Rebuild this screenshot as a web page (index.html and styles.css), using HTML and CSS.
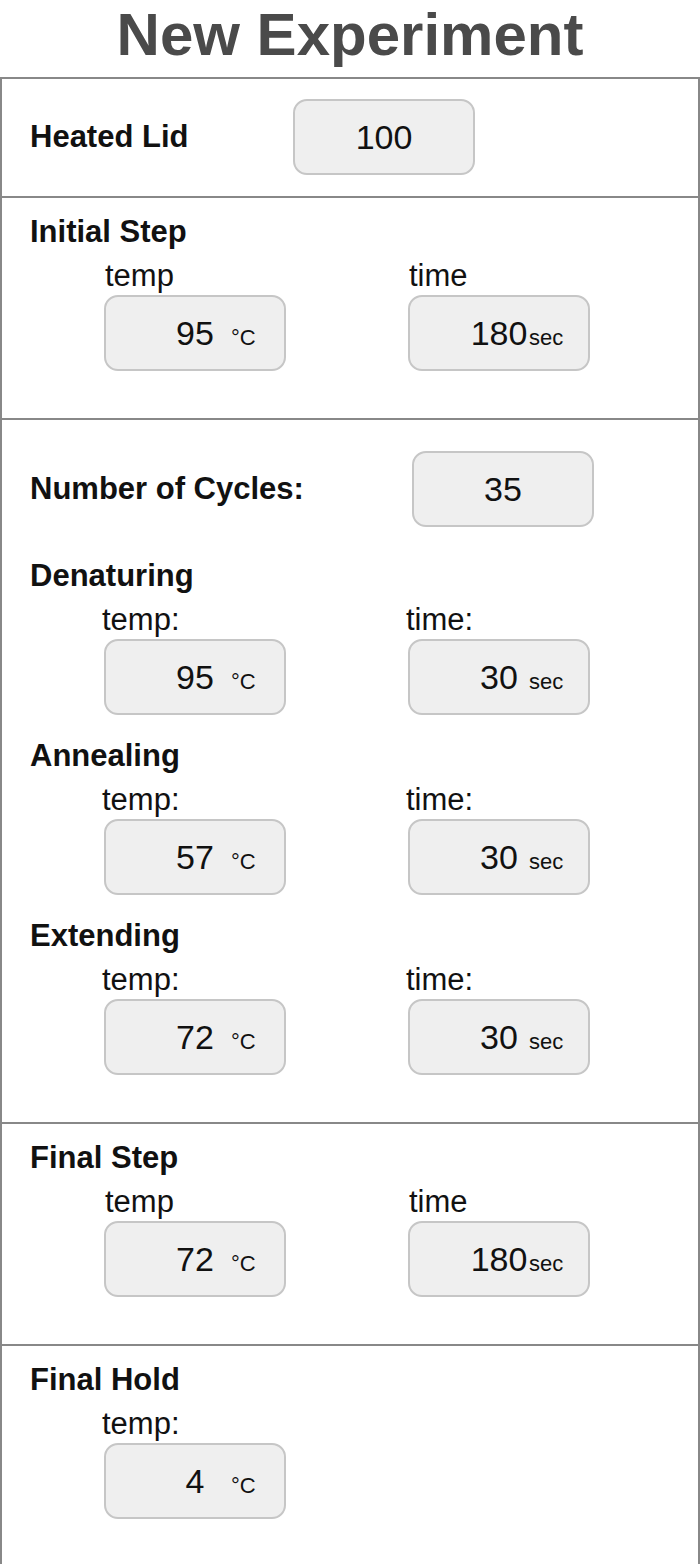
FILE: index.html
```html
<!DOCTYPE html>
<html lang="en">
<head>
  <meta charset="UTF-8" />
  <meta name="viewport" content="width=device-width, initial-scale=1" />
  <title>New Experiment</title>
  <link rel="stylesheet" href="styles.css">
</head>
<body>
  <h1 class="title">New Experiment</h1>

  <div class="panel">
    <section class="section row-section">
      <div class="row">
        <span class="row-name lid-name">Heated Lid</span>
        <div class="field"><span class="num">100</span></div>
      </div>
    </section>

    <section class="section">
      <div class="step">
        <div class="step-name">Initial Step</div>
        <div class="fields">
          <div class="col">
            <div class="col-label">temp</div>
            <div class="field"><span class="num">95</span><span class="unit unit-c">°C</span></div>
          </div>
          <div class="col">
            <div class="col-label">time</div>
            <div class="field"><span class="num">180</span><span class="unit unit-s">sec</span></div>
          </div>
        </div>
      </div>
    </section>

    <section class="section cycles">
      <div class="row">
        <span class="row-name cycle-name">Number of Cycles:</span>
        <div class="field"><span class="num">35</span></div>
      </div>

      <div class="step">
        <div class="step-name">Denaturing</div>
        <div class="fields">
          <div class="col">
            <div class="col-label colon">temp:</div>
            <div class="field"><span class="num">95</span><span class="unit unit-c">°C</span></div>
          </div>
          <div class="col">
            <div class="col-label colon">time:</div>
            <div class="field"><span class="num">30</span><span class="unit unit-s">sec</span></div>
          </div>
        </div>
      </div>

      <div class="step">
        <div class="step-name">Annealing</div>
        <div class="fields">
          <div class="col">
            <div class="col-label colon">temp:</div>
            <div class="field"><span class="num">57</span><span class="unit unit-c">°C</span></div>
          </div>
          <div class="col">
            <div class="col-label colon">time:</div>
            <div class="field"><span class="num">30</span><span class="unit unit-s">sec</span></div>
          </div>
        </div>
      </div>

      <div class="step">
        <div class="step-name">Extending</div>
        <div class="fields">
          <div class="col">
            <div class="col-label colon">temp:</div>
            <div class="field"><span class="num">72</span><span class="unit unit-c">°C</span></div>
          </div>
          <div class="col">
            <div class="col-label colon">time:</div>
            <div class="field"><span class="num">30</span><span class="unit unit-s">sec</span></div>
          </div>
        </div>
      </div>
    </section>

    <section class="section">
      <div class="step">
        <div class="step-name">Final Step</div>
        <div class="fields">
          <div class="col">
            <div class="col-label">temp</div>
            <div class="field"><span class="num">72</span><span class="unit unit-c">°C</span></div>
          </div>
          <div class="col">
            <div class="col-label">time</div>
            <div class="field"><span class="num">180</span><span class="unit unit-s">sec</span></div>
          </div>
        </div>
      </div>
    </section>

    <section class="section">
      <div class="step">
        <div class="step-name">Final Hold</div>
        <div class="fields">
          <div class="col">
            <div class="col-label colon">temp:</div>
            <div class="field"><span class="num">4</span><span class="unit unit-c">°C</span></div>
          </div>
        </div>
      </div>
    </section>
  </div>
</body>
</html>
```

FILE: styles.css
```css
body {
  font-family: "Liberation Sans", Arial, Helvetica, sans-serif;
  margin: 0;
  background: #fff;
  color: #111;
}
.title {
  margin: 0 0 8px;
  font-size: 60px;
  line-height: normal;
  font-weight: bold;
  text-align: center;
  color: #4a4a4a;
}
.panel {
  border: 2px solid #888;
}
.section {
  padding: 16px 28px 47px;
}
.section + .section {
  border-top: 2px solid #888;
}
.row-section {
  padding: 20px 28px 21px;
}
.cycles {
  padding-top: 31px;
}
.row {
  display: flex;
  align-items: center;
}
.row-name {
  font-size: 31px;
  line-height: 36px;
  font-weight: bold;
}
.lid-name {
  width: 263px;
}
.cycle-name {
  width: 382px;
}
.cycles .row {
  margin-bottom: 31px;
}
.step + .step {
  margin-top: 23px;
}
.step-name {
  font-size: 31px;
  line-height: 36px;
  font-weight: bold;
  margin-bottom: 8px;
}
.fields {
  display: flex;
  gap: 122px;
  padding-left: 74px;
}
.col-label {
  font-size: 31px;
  line-height: 36px;
  margin-bottom: 1px;
  padding-left: 1px;
}
.col-label.colon {
  margin-left: -3px;
}
.field {
  box-sizing: border-box;
  width: 182px;
  height: 76px;
  border: 2px solid #c6c6c6;
  border-radius: 14px;
  background: #efefef;
  display: grid;
  align-content: center;
  align-items: baseline;
}
.field > span {
  grid-area: 1 / 1;
}
.num {
  justify-self: center;
  font-size: 34px;
  line-height: 40px;
}
.unit {
  justify-self: start;
  font-size: 22px;
}
.unit-c {
  margin-left: 125px;
}
.unit-s {
  margin-left: 119px;
}
```
